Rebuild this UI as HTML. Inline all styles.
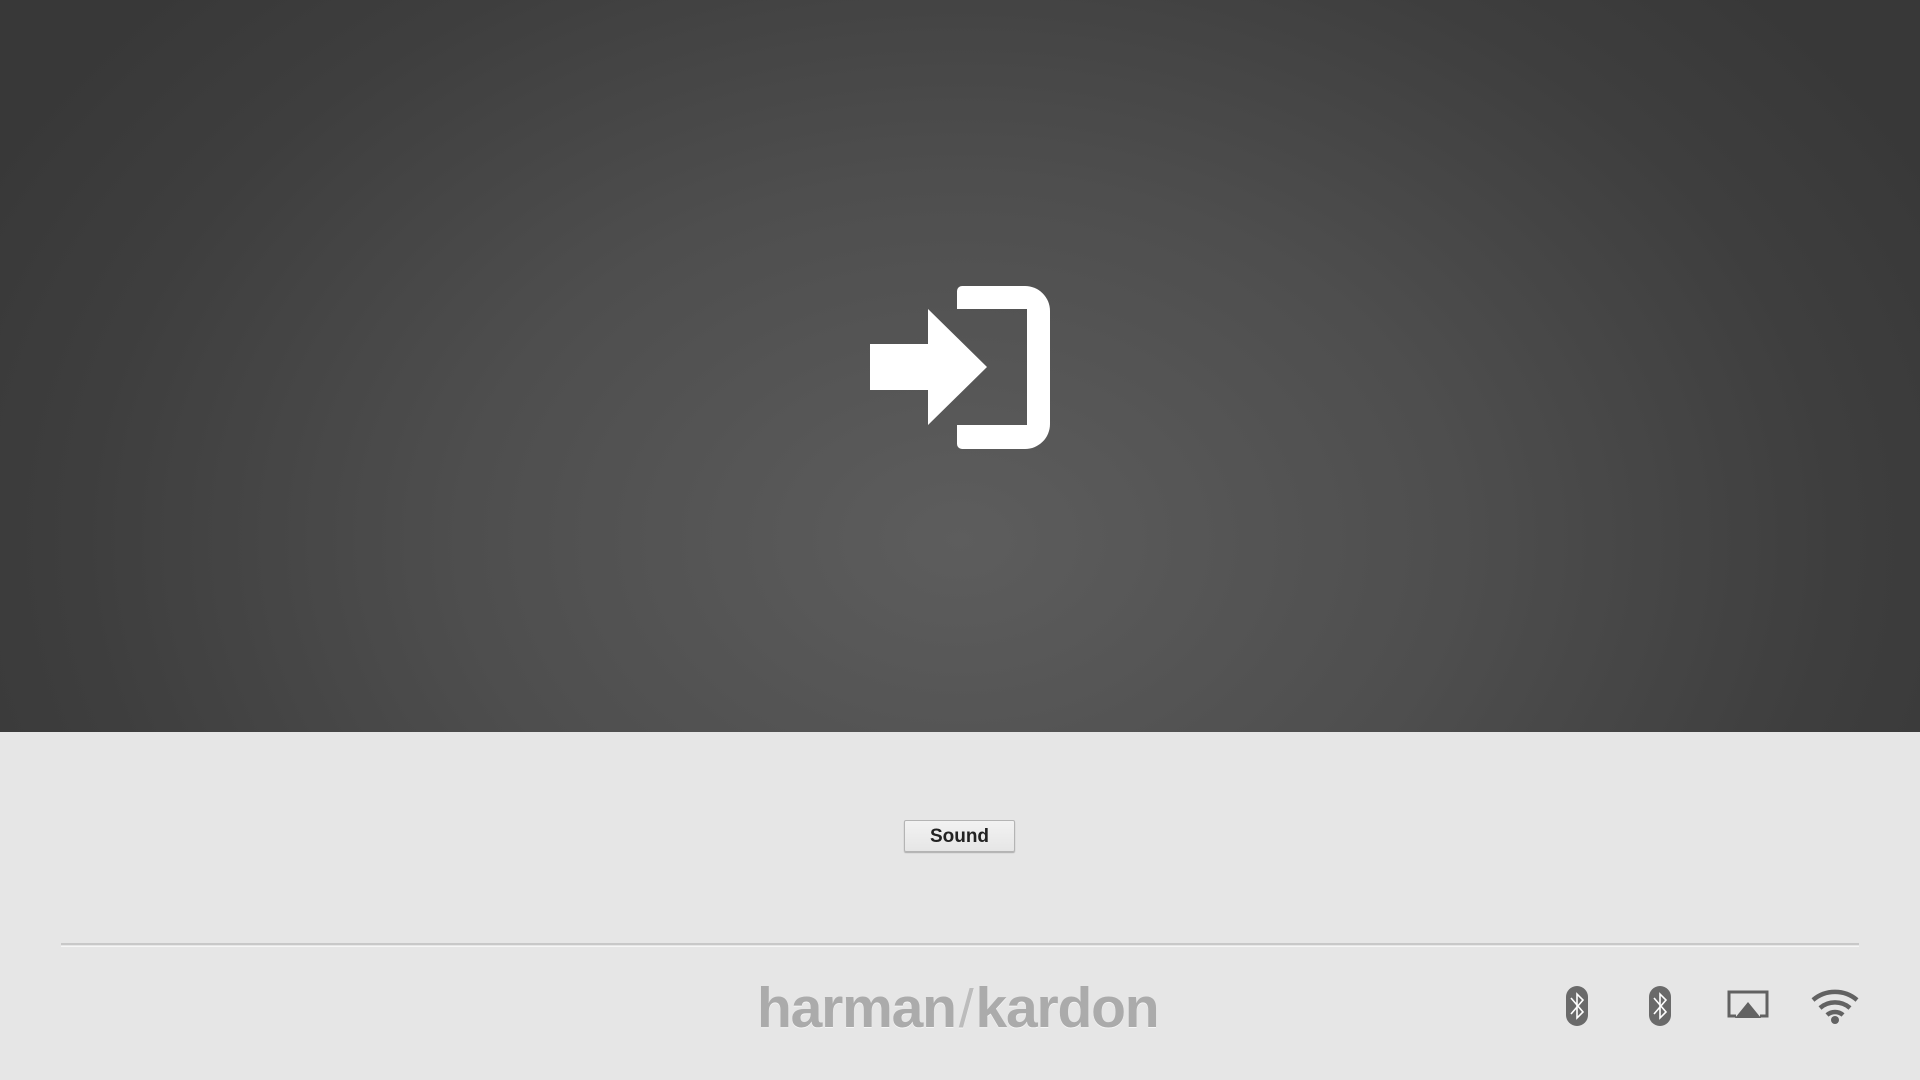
<!DOCTYPE html>
<html><head><meta charset="utf-8"><style>
html,body{margin:0;padding:0;width:1920px;height:1080px;overflow:hidden;background:#e6e6e6;font-family:"Liberation Sans",sans-serif;}
#top{position:absolute;left:0;top:0;width:1920px;height:732px;background:radial-gradient(ellipse 1100px 800px at 960px 540px,#5d5d5d 0%,#4e4e4e 45%,#3e3e3e 80%,#383838 100%);}
#btn{position:absolute;left:904px;top:820px;width:111px;height:32px;border:1px solid #b4b4b4;border-radius:2px;background:linear-gradient(#f2f2f2,#e6e6e6);box-shadow:0 1px 1px rgba(0,0,0,.25);font-size:19px;font-weight:bold;color:#222;text-align:center;line-height:31px;box-sizing:border-box;}
#l1{position:absolute;left:61px;width:1798px;top:943px;height:2px;background:#c8c8c8;}
#l2{position:absolute;left:61px;width:1798px;top:946px;height:1px;background:#f6f6f6;}
#logo{position:absolute;left:757px;top:973px;font-size:57px;font-weight:bold;color:#ababab;letter-spacing:-1.2px;line-height:70px;text-shadow:0 1px 0 #f5f5f5;}
#logo span{font-weight:normal;color:#bcbcbc;margin:0 3px;font-size:54px;}
</style></head><body>
<div id="top"></div>
<svg style="position:absolute;left:0;top:0" width="1920" height="732">
<path fill="#fff" d="M870,344H928V309L987,367L928,425V390H870Z"/>
<path fill="#fff" d="M962,286H1025A25,25 0 0 1 1050,311V424A25,25 0 0 1 1025,449H962A5,5 0 0 1 957,444V425H1027V309H957V291A5,5 0 0 1 962,286Z"/>
</svg>
<div id="btn">Sound</div>
<div id="l1"></div><div id="l2"></div>
<div id="logo">harman<span>/</span>kardon</div>
<svg style="position:absolute;left:0;top:960px" width="1920" height="90">
<g fill="#6a6a6a">
<rect x="1566" y="26" width="22" height="40" rx="11"/>
<rect x="1649" y="26" width="22" height="40" rx="11"/>
</g>
<g fill="none" stroke="#fff" stroke-width="1.6">
<path d="M1571,38L1583,52L1577,58V34L1583,40L1571,54"/>
<path d="M1654,38L1666,52L1660,58V34L1666,40L1654,54"/>
</g>
<path d="M1736,56H1729V32H1767V56H1760" fill="none" stroke="#626262" stroke-width="3"/>
<path d="M1748,42L1761,58H1735Z" fill="#626262"/>
<g fill="none" stroke="#626262" stroke-width="4.5">
<path d="M1813,40A34,34 0 0 1 1857,40"/>
<path d="M1820,48A23,23 0 0 1 1850,48"/>
<path d="M1827,55A12,12 0 0 1 1843,55"/>
</g>
<circle cx="1835" cy="60" r="4" fill="#626262"/>
</svg>
</body></html>
